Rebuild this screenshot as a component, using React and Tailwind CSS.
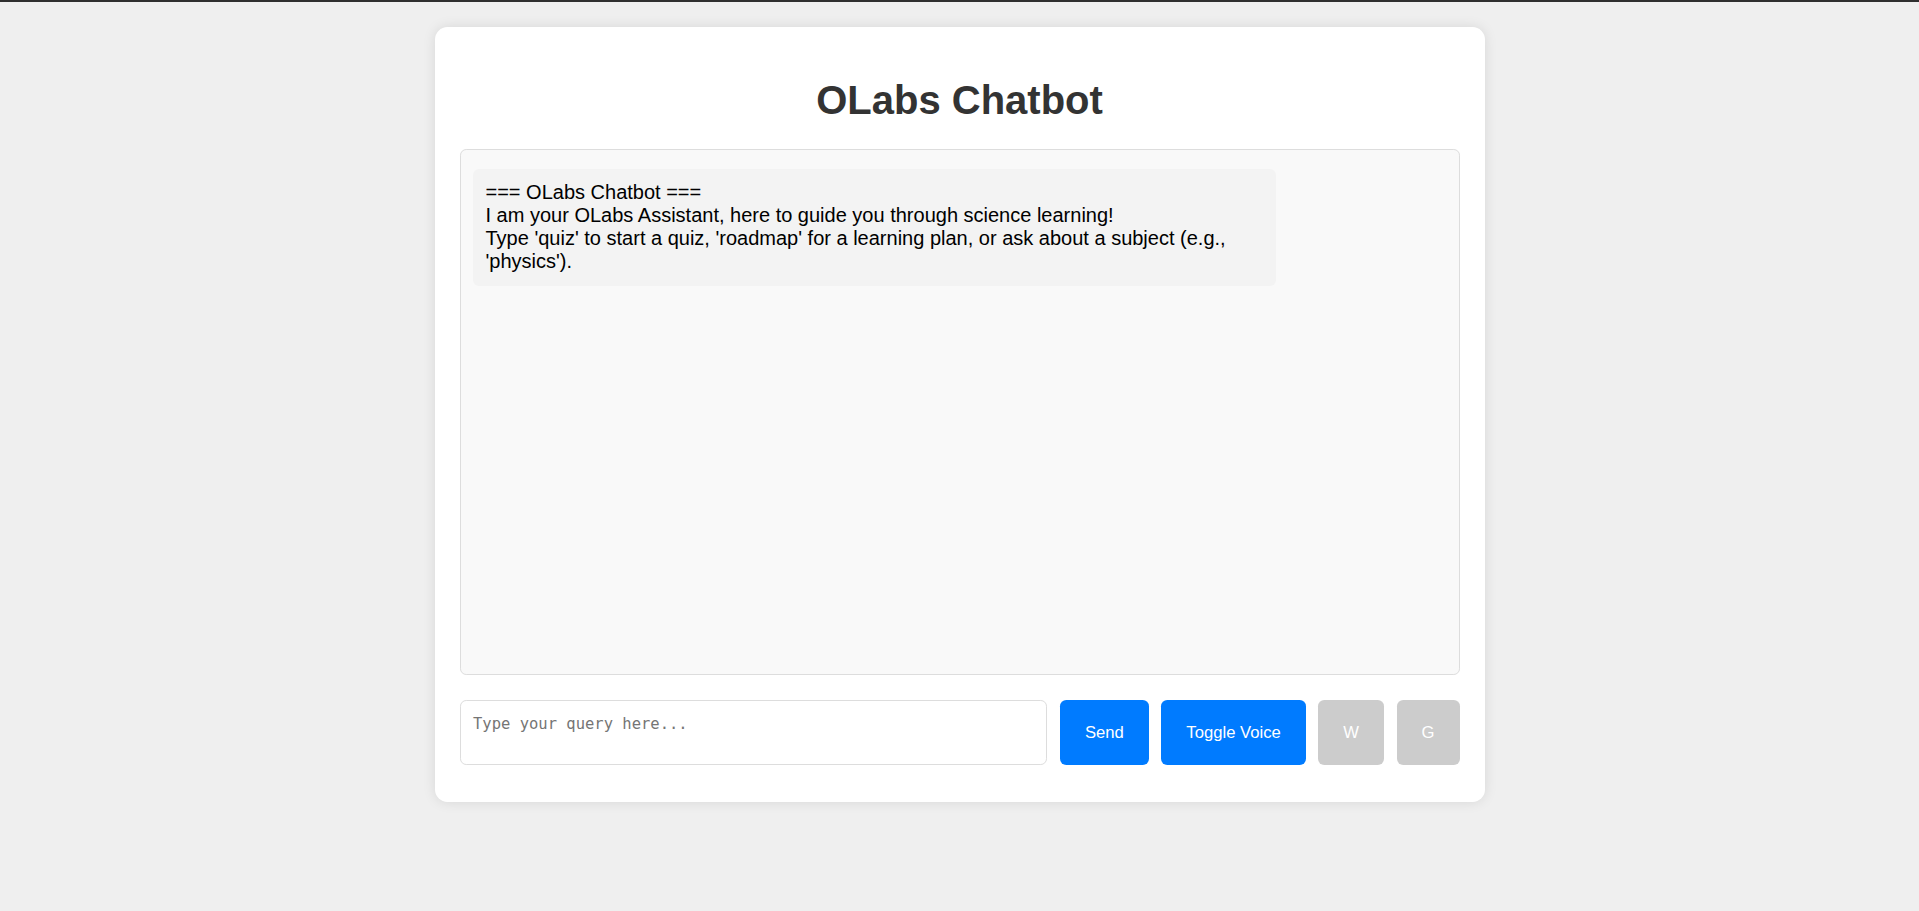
import React from "react";

export default function App() {
  return (
    <div
      className="min-h-[911px] bg-[#efefef] border-t-2 border-[#2f2f2f]"
      style={{ fontFamily: '"Liberation Sans", Arial, sans-serif' }}
    >
      <div className="mx-auto mt-[25px] w-[1050px] rounded-[12.5px] bg-white px-[25px] pt-[25px] pb-[37px] shadow-[0_0_12.5px_rgba(0,0,0,0.1)]">
        <h1 className="mt-[25px] mb-[26px] text-center text-[40px] font-bold leading-[46px] text-[#333]">
          OLabs Chatbot
        </h1>
        <div className="h-[526px] rounded-[6.25px] border border-[#ddd] bg-[#f9f9f9] px-[12.5px] pt-[18.5px]">
          <div className="w-[803px] rounded-[6.25px] bg-[#f3f3f3] p-[12.5px] text-[20px] leading-[23px] text-black">
            <div>=== OLabs Chatbot ===</div>
            <div>I am your OLabs Assistant, here to guide you through science learning!</div>
            <div>
              Type 'quiz' to start a quiz, 'roadmap' for a learning plan, or ask about a subject (e.g., 'physics').
            </div>
          </div>
        </div>
        <div className="mt-[25px] flex h-[65px] gap-[12.5px]">
          <textarea
            placeholder="Type your query here..."
            className="h-full flex-1 resize-none rounded-[6.25px] border border-[#ddd] bg-white p-[12.5px] text-[15.5px] leading-[20px] placeholder-[#757575] outline-none"
            style={{ fontFamily: '"DejaVu Sans Mono", "Liberation Mono", monospace' }}
          />
          <button className="h-full rounded-[6.25px] bg-[#007bff] px-[25px] text-[16.67px] text-white">
            Send
          </button>
          <button className="h-full whitespace-nowrap rounded-[6.25px] bg-[#007bff] px-[25px] text-[16.67px] text-white">
            Toggle Voice
          </button>
          <button className="h-full rounded-[6.25px] bg-[#cccccc] px-[25px] text-[16.67px] text-white">
            W
          </button>
          <button className="h-full rounded-[6.25px] bg-[#cccccc] px-[25px] text-[16.67px] text-white">
            G
          </button>
        </div>
      </div>
    </div>
  );
}
